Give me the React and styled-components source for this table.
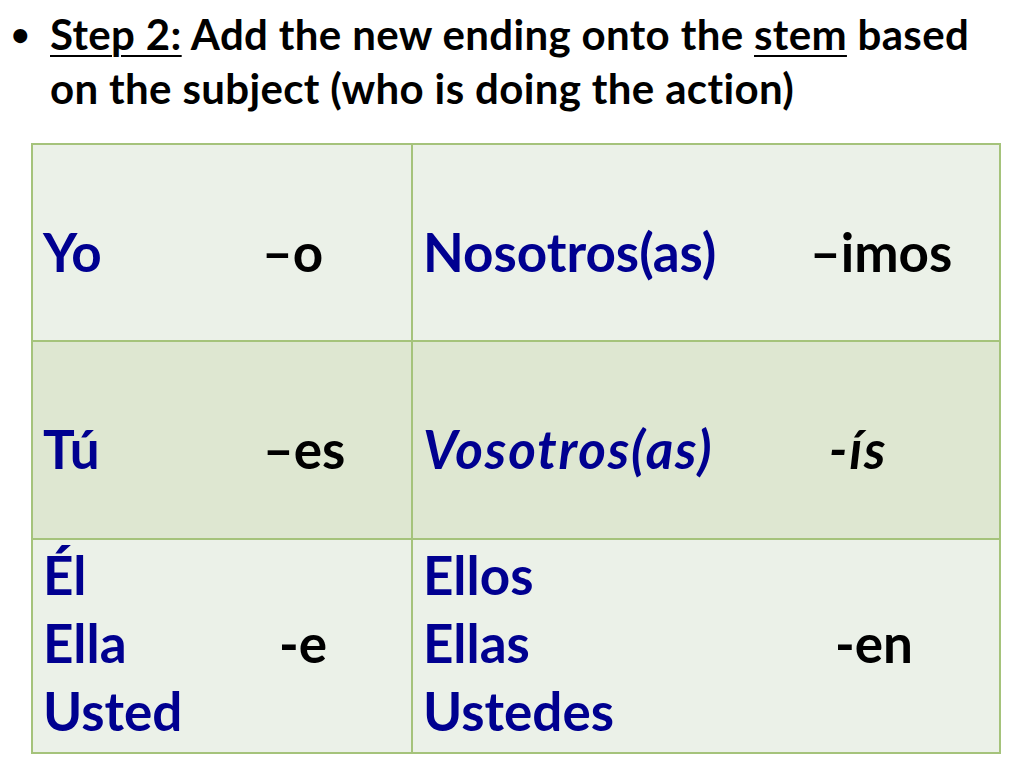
import React from "react";
import styled, { createGlobalStyle } from "styled-components";

const GlobalStyle = createGlobalStyle`
  body {
    margin: 0;
    background: #ffffff;
    font-family: Lato, "Open Sans", sans-serif;
    font-variant-ligatures: none;
  }
`;

const Slide = styled.div`
  width: 1024px;
  height: 768px;
  overflow: hidden;
  background: #ffffff;
  display: flex;
  flex-direction: column;
`;

const BulletItem = styled.div`
  display: flex;
  padding-top: 7px;
  padding-left: 11px;
  font-size: 42px;
  line-height: 54px;
  font-weight: 700;
  color: #000000;
`;

const Marker = styled.span`
  width: 39px;
  flex: none;
  font-size: 32px;
`;

const BulletText = styled.p`
  margin: 0;
  width: 950px;
  letter-spacing: 0.35px;
`;

const Under = styled.span`
  text-decoration: underline;
  text-decoration-thickness: 2px;
  text-underline-offset: 5px;
`;

const Table = styled.div`
  margin: 28px 0 0 31px;
  width: 970px;
  display: grid;
  grid-template-columns: 380px 1fr;
  grid-template-rows: 197px 198px 212px;
  border: 2px solid #a5c37b;
  box-sizing: border-box;
`;

const Cell = styled.div`
  display: grid;
  grid-template-columns: ${(p) => p.split}px 1fr;
  align-items: center;
  padding: ${(p) => (p.stacked ? "1px 0 0 10px" : "18px 0 0 10px")};
  background: ${(p) => (p.shade ? "#dee7d1" : "#ebf1e8")};
  border-right: ${(p) => (p.first ? "2px solid #a5c37b" : "none")};
  border-bottom: ${(p) => (p.last ? "none" : "2px solid #a5c37b")};
  font-size: 53px;
  line-height: 68px;
  font-weight: 700;
  font-style: ${(p) => (p.italic ? "italic" : "normal")};
  letter-spacing: ${(p) => (p.italic ? "1.8px" : "0")};
  ${(p) => p.stacked && "align-content: start;"}
`;

const Pronoun = styled.div`
  color: #000090;
  white-space: nowrap;
`;

const Ending = styled.div`
  color: #000000;
  white-space: nowrap;
`;

const rows = [
  {
    shade: false,
    left: { names: ["Yo"], ending: "\u2013o", split: 219 },
    right: { names: ["Nosotros(as)"], ending: "\u2013imos", split: 387 },
  },
  {
    shade: true,
    left: { names: ["Tú"], ending: "\u2013es", split: 220 },
    right: { names: ["Vosotros(as)"], ending: "-ís", split: 406, italic: true },
  },
  {
    shade: false,
    stacked: true,
    left: { names: ["Él", "Ella", "Usted"], ending: "-e", split: 236 },
    right: { names: ["Ellos", "Ellas", "Ustedes"], ending: "-en", split: 412 },
  },
];

function Conjugation({ data, ...rest }) {
  return (
    <Cell split={data.split} italic={data.italic} {...rest}>
      <Pronoun>
        {data.names.map((n) => (
          <div key={n}>{n}</div>
        ))}
      </Pronoun>
      <Ending>{data.ending}</Ending>
    </Cell>
  );
}

export default function App() {
  return (
    <>
      <GlobalStyle />
      <Slide>
        <BulletItem>
          <Marker>•</Marker>
          <BulletText>
            <Under>Step 2:</Under> Add the new ending onto the <Under>stem</Under> based
            on the subject (who is doing the action)
          </BulletText>
        </BulletItem>
        <Table>
          {rows.map((r, i) => (
            <React.Fragment key={i}>
              <Conjugation
                data={r.left}
                shade={r.shade}
                stacked={r.stacked}
                first
                last={i === rows.length - 1}
              />
              <Conjugation
                data={r.right}
                shade={r.shade}
                stacked={r.stacked}
                last={i === rows.length - 1}
              />
            </React.Fragment>
          ))}
        </Table>
      </Slide>
    </>
  );
}
